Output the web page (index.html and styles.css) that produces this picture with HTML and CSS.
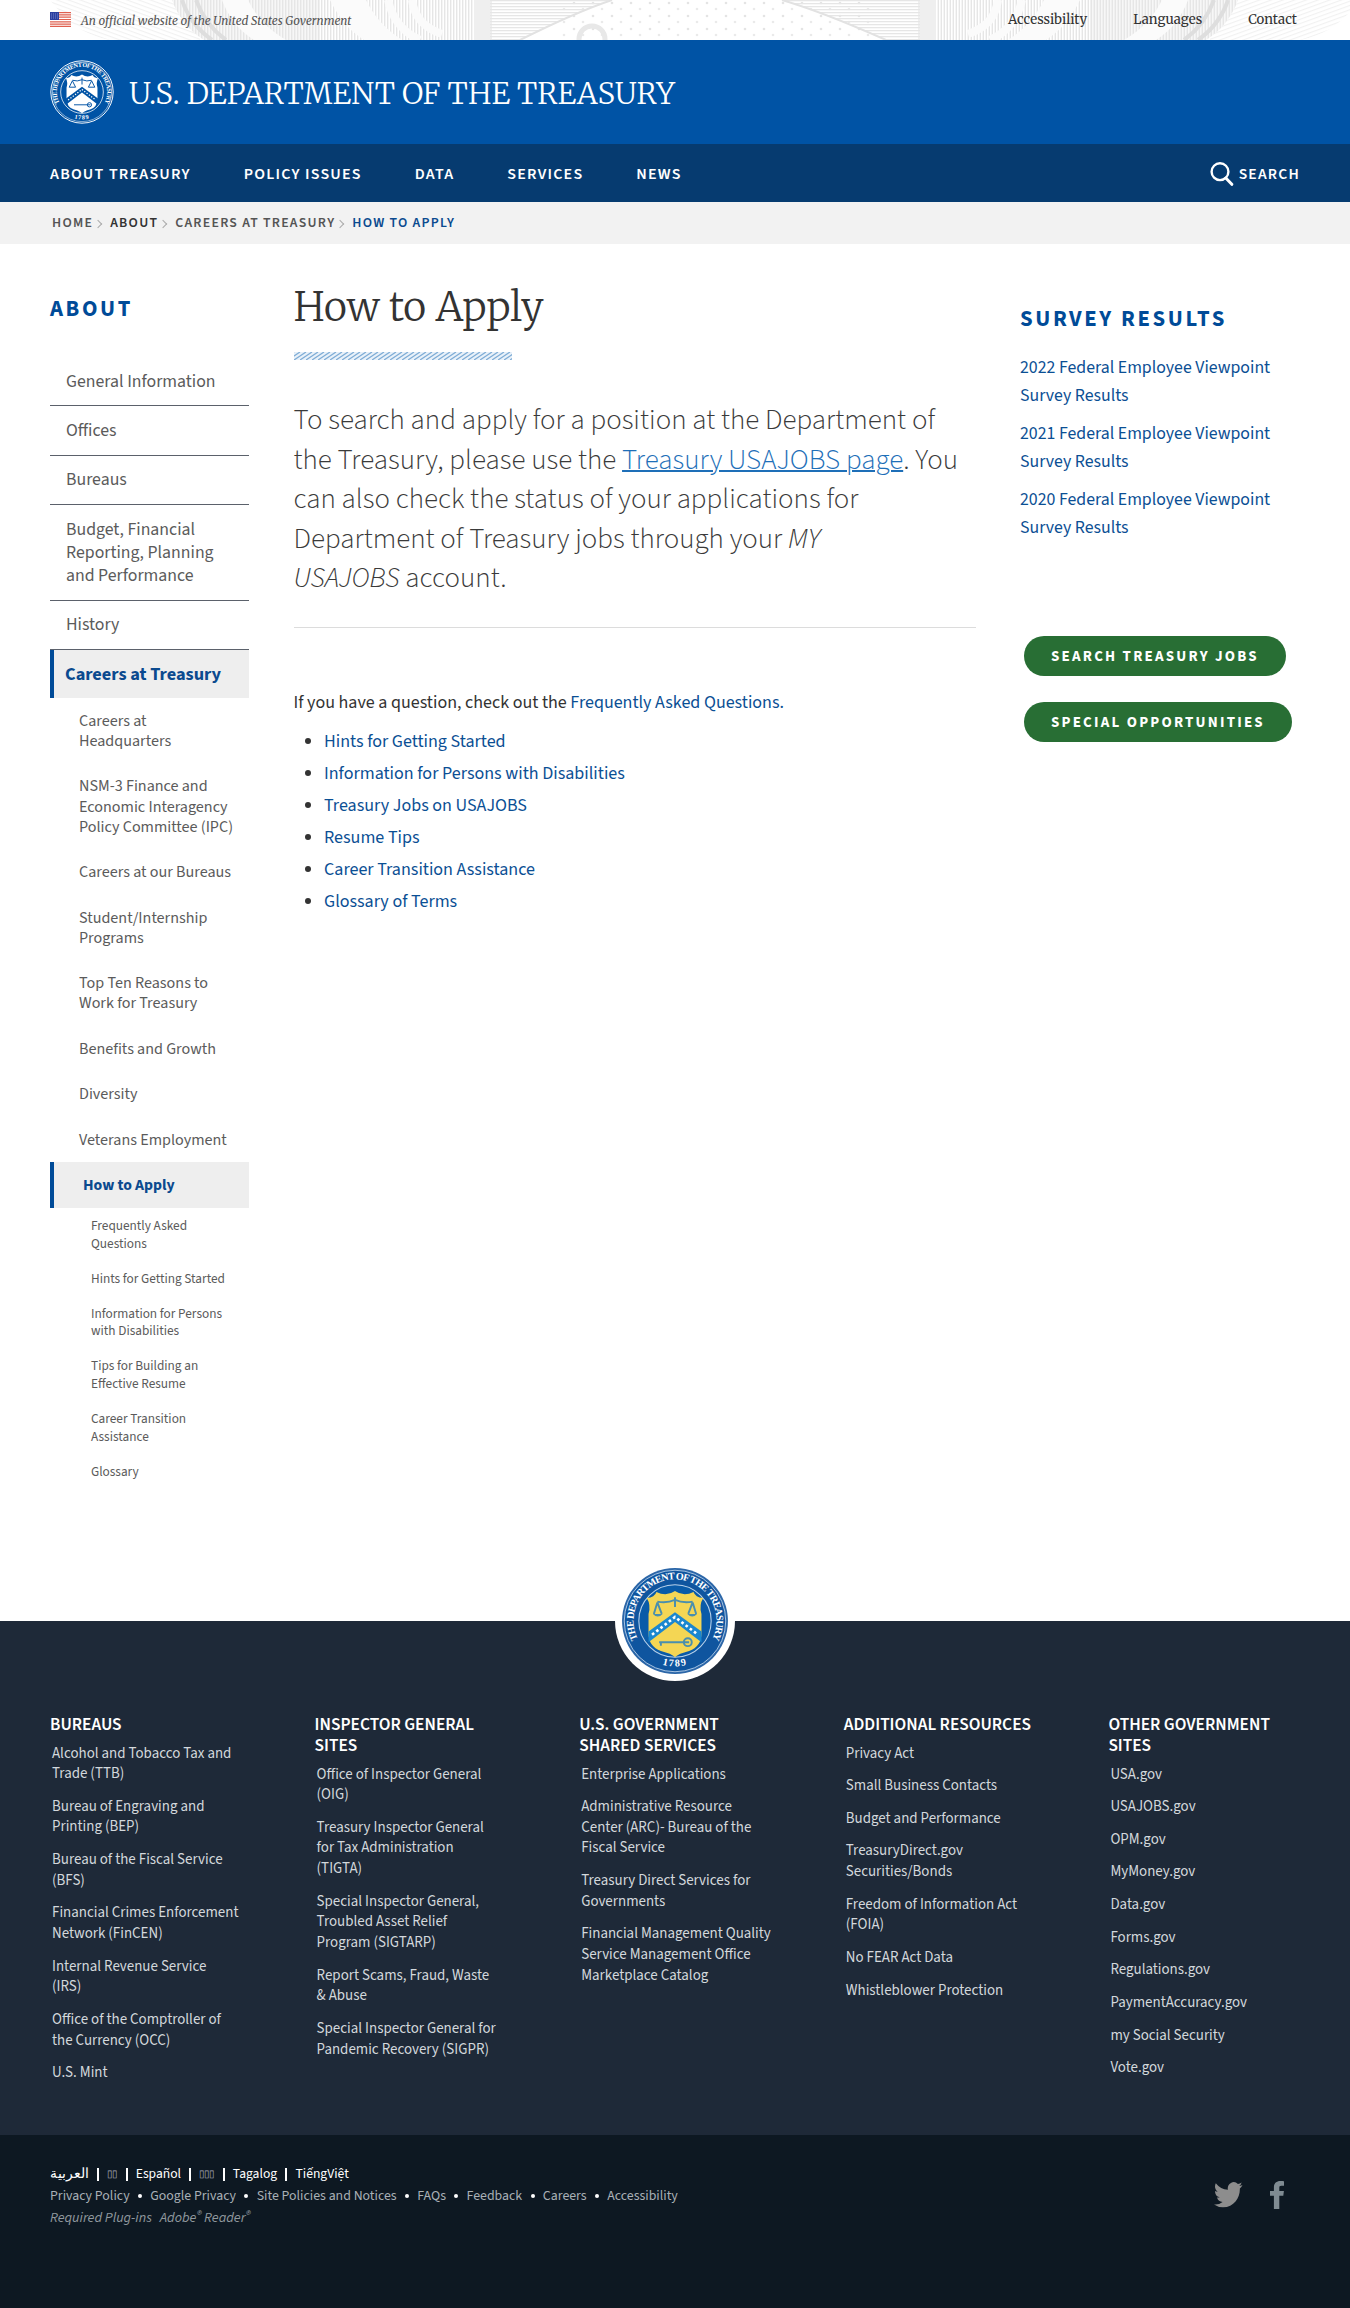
FILE: index.html
```
<!DOCTYPE html>
<html lang="en">
<head>
<meta charset="utf-8">
<title>How to Apply | U.S. Department of the Treasury</title>
<link rel="stylesheet" href="styles.css">
</head>
<body>
<div class="topbar">
  <svg class="engraving" viewBox="0 0 1350 40" width="1350" height="40" aria-hidden="true">
    <defs>
      <pattern id="vl" width="3" height="40" patternUnits="userSpaceOnUse"><rect width="1.4" height="40" fill="#e6e6e6"/></pattern>
      <pattern id="hl" width="40" height="3" patternUnits="userSpaceOnUse"><rect width="40" height="1.3" fill="#e6e6e6"/></pattern>
      <pattern id="dl" width="4" height="4" patternUnits="userSpaceOnUse" patternTransform="rotate(20)"><rect width="4" height="1.2" fill="#f1f1f1"/></pattern>
      <pattern id="dots" width="19" height="13" patternUnits="userSpaceOnUse"><circle cx="4" cy="3" r="1.3" fill="#e4e4e4"/><circle cx="13" cy="9" r="1.3" fill="#eaeaea"/></pattern>
      <g id="scroll">
        <path d="M50 0H200V40H110C80 34 66 20 50 0Z" fill="url(#dl)"/>
        <path d="M172 0H320V40H204C188 30 178 16 172 0Z" fill="#f7f7f7"/>
        <path d="M172 0H488V40H204C188 30 178 16 172 0Z" fill="url(#vl)"/>
        <path d="M182 0C188 18 198 30 212 40M196 0C202 16 212 30 226 40" fill="none" stroke="#dedede" stroke-width="4"/>
        <path d="M222 0H248C256 16 266 28 286 40H254C238 30 228 16 222 0ZM330 0H366C374 16 384 28 402 40H364C348 30 338 16 330 0Z" fill="#fbfbfb"/>
        <path d="M388 0C392 18 402 32 420 40M412 0C414 16 424 28 442 34" fill="none" stroke="#fbfbfb" stroke-width="8"/>
        <path d="M474 0H492V40H474Z" fill="#efefef"/>
      </g>
    </defs>
    <rect x="560" width="310" height="40" fill="url(#dots)"/>
    <use href="#scroll"/>
    <use href="#scroll" transform="translate(1410 0) scale(-1 1)"/>
    <path d="M490 0H610C582 10 550 24 520 40H490Z" fill="url(#hl)"/>
    <path d="M612 0C582 10 552 24 520 40" fill="none" stroke="#e2e2e2" stroke-width="2"/>
    <circle cx="592" cy="39" r="13" fill="none" stroke="#e8e8e8" stroke-width="5"/>
    <path d="M782 0H920V40H886C850 24 816 10 782 0Z" fill="url(#hl)"/>
    <path d="M782 0C816 10 850 24 886 40" fill="none" stroke="#e2e2e2" stroke-width="2"/>
  </svg>
  <div class="topbar-row">
    <div class="official">
      <svg class="flag" viewBox="0 0 21 15" width="21" height="15" aria-hidden="true">
        <rect width="21" height="15" fill="#fff"/>
        <path d="M0 .6H21M0 2.9H21M0 5.2H21M0 7.5H21M0 9.8H21M0 12.1H21M0 14.4H21" stroke="#e0604f" stroke-width="1.2"/>
        <rect width="9" height="8" fill="#2b3fa0"/>
        <path d="M1 2H9M1 4H9M1 6H9" stroke="#8f9ad6" stroke-width=".8" stroke-dasharray="1 1"/>
      </svg>
      <span>An official website of the United States Government</span>
    </div>
    <nav class="utility"><a>Accessibility</a><a>Languages</a><a>Contact</a></nav>
  </div>
</div>

<header class="brand">
  <svg class="brand-seal" viewBox="0 0 120 120" width="64" height="64" aria-hidden="true">
    <defs>
      <path id="arc-top" d="M19.1 83A47 47 0 1 1 100.9 83"/>
      <path id="arc-bottom" d="M30 102A52 52 0 0 0 90 102"/>
    </defs>
    <circle cx="60" cy="60" r="58.5" fill="none" stroke="#fff" stroke-width="1.8"/>
    <circle cx="60" cy="60" r="55.5" fill="none" stroke="#fff" stroke-width="1"/>
    <circle cx="60" cy="60" r="40" fill="none" stroke="#fff" stroke-width="1.4"/>
    <text class="seal-text" fill="#fff"><textPath href="#arc-top" startOffset="50%" text-anchor="middle" textLength="190">THE DEPARTMENT OF THE TREASURY</textPath></text>
    <text class="seal-text seal-year" fill="#fff"><textPath href="#arc-bottom" startOffset="50%" text-anchor="middle">1789</textPath></text>
    <path d="M30 34Q38 33 40 28Q50 34 60 27Q70 34 80 28Q82 33 90 34Q86 42 89 52V72Q89 88 75 93Q64 96 60 100Q56 96 45 93Q31 88 31 72V52Q34 42 30 34Z" fill="#fff"/>
    <path d="M60 50L90 72V84L60 61L30 84V72Z" fill="#0053a5"/>
    <path d="M34 75L60 55.5L86 75" fill="none" stroke="#fff" stroke-width="2.4" stroke-dasharray="2.4 3"/>
    <path d="M42 38Q51 41 60 37Q69 41 78 38M60 33V46M42 39L36 51H48ZM78 39L72 51H84ZM45 84H76M70 84A4 4 0 1 0 78 84A4 4 0 1 0 70 84" fill="none" stroke="#0053a5" stroke-width="1.8"/>
  </svg>
  <span class="brand-name">U.S. DEPARTMENT OF THE TREASURY</span>
</header>

<nav class="mainnav">
  <div class="mainnav-links"><a>ABOUT TREASURY</a><a>POLICY ISSUES</a><a>DATA</a><a>SERVICES</a><a>NEWS</a></div>
  <a class="search">
    <svg viewBox="0 0 24 24" width="24" height="24" aria-hidden="true"><circle cx="10" cy="9.7" r="8.4" fill="none" stroke="#fff" stroke-width="2.4"/><path d="M15.8 16L21.8 22.3" stroke="#fff" stroke-width="3" stroke-linecap="round"/></svg>
    <span>SEARCH</span>
  </a>
</nav>

<nav class="crumbs">
  <a>HOME</a><i class="chev"></i><a class="dark">ABOUT</a><i class="chev"></i><a>CAREERS AT TREASURY</a><i class="chev"></i><a class="here">HOW TO APPLY</a>
</nav>

<div class="page">
  <aside class="side">
    <h2>ABOUT</h2>
    <ul class="side-list">
      <li>General Information</li>
      <li>Offices</li>
      <li>Bureaus</li>
      <li>Budget, Financial<br>Reporting, Planning<br>and Performance</li>
      <li>History</li>
      <li class="active">Careers at Treasury</li>
    </ul>
    <ul class="side-sub">
      <li>Careers at<br>Headquarters</li>
      <li>NSM-3 Finance and<br>Economic Interagency<br>Policy Committee (IPC)</li>
      <li>Careers at our Bureaus</li>
      <li>Student/Internship<br>Programs</li>
      <li>Top Ten Reasons to<br>Work for Treasury</li>
      <li>Benefits and Growth</li>
      <li>Diversity</li>
      <li>Veterans Employment</li>
      <li class="active">How to Apply</li>
    </ul>
    <ul class="side-leaf">
      <li>Frequently Asked<br>Questions</li>
      <li>Hints for Getting Started</li>
      <li>Information for Persons<br>with Disabilities</li>
      <li>Tips for Building an<br>Effective Resume</li>
      <li>Career Transition<br>Assistance</li>
      <li>Glossary</li>
    </ul>
  </aside>

  <main class="main">
    <h1>How to Apply</h1>
    <svg class="rule" width="218" height="8" aria-hidden="true">
      <defs><pattern id="stripe" width="6" height="8" patternUnits="userSpaceOnUse"><path d="M-12 8L0 0M-6 8L6 0M0 8L12 0" stroke="#7fadd6" stroke-width="1.3"/></pattern></defs>
      <rect width="218" height="8" fill="#e9f1f9"/>
      <rect width="218" height="8" fill="url(#stripe)"/>
    </svg>
    <p class="lede">To search and apply for a position at the Department of<br>the Treasury, please use the <a>Treasury USAJOBS page</a>. You<br>can also check the status of your applications for<br>Department of Treasury jobs through your <em>MY<br>USAJOBS</em> account.</p>
    <p class="question">If you have a question, check out the <a>Frequently Asked Questions.</a></p>
    <ul class="links">
      <li><a>Hints for Getting Started</a></li>
      <li><a>Information for Persons with Disabilities</a></li>
      <li><a>Treasury Jobs on USAJOBS</a></li>
      <li><a>Resume Tips</a></li>
      <li><a>Career Transition Assistance</a></li>
      <li><a>Glossary of Terms</a></li>
    </ul>
  </main>

  <aside class="right">
    <h2>SURVEY RESULTS</h2>
    <ul class="survey">
      <li>2022 Federal Employee Viewpoint<br>Survey Results</li>
      <li>2021 Federal Employee Viewpoint<br>Survey Results</li>
      <li>2020 Federal Employee Viewpoint<br>Survey Results</li>
    </ul>
    <div class="buttons"><a>SEARCH TREASURY JOBS</a><a>SPECIAL OPPORTUNITIES</a></div>
  </aside>
</div>

<footer class="footer">
  <svg class="footer-seal" viewBox="-8 -8 136 136" width="120" height="120" aria-hidden="true">
    <circle cx="60" cy="60" r="68" fill="#fff"/>
    <circle cx="60" cy="60" r="60" fill="#2b66a8"/>
    <circle cx="60" cy="60" r="57.5" fill="#0f559f" stroke="#b9d2ea" stroke-width="1"/>
    <circle cx="60" cy="60" r="41" fill="#0a5ba8" stroke="#b9d2ea" stroke-width="1.2"/>
    <text class="seal-text" fill="#fff"><textPath href="#arc-top" startOffset="50%" text-anchor="middle" textLength="190">THE DEPARTMENT OF THE TREASURY</textPath></text>
    <text class="seal-text seal-year" fill="#fff"><textPath href="#arc-bottom" startOffset="50%" text-anchor="middle">1789</textPath></text>
    <path d="M28 34Q37 33 39 27Q50 33 60 26Q70 33 81 27Q83 33 92 34Q87 42 90 52V74Q90 89 76 94Q64 97 60 101Q56 97 44 94Q30 89 30 74V52Q33 42 28 34Z" fill="#f4d654"/>
    <path d="M60 50L90 72V84L60 61L30 84V72Z" fill="#1b87cf"/>
    <path d="M34 75.5L60 55.5L86 75.5" fill="none" stroke="#fff" stroke-width="3" stroke-dasharray="3 3"/>
    <path d="M40 38Q51 40 60 36Q69 40 80 38M60 33V44M40 39L36 52M40 39L45 52M80 39L75 52M80 39L84 52M42 84H76M44 84V88M70 84A4 4 0 1 0 79 84A4 4 0 1 0 70 84" fill="none" stroke="#4a8fae" stroke-width="2.2"/>
    <path d="M35 52H46Q40.5 58 35 52ZM74 52H85Q79.5 58 74 52Z" fill="#4a8fae"/>
  </svg>
  <div class="footer-cols">
    <section><h3>BUREAUS</h3><ul>
      <li>Alcohol and Tobacco Tax and<br>Trade (TTB)</li><li>Bureau of Engraving and<br>Printing (BEP)</li><li>Bureau of the Fiscal Service<br>(BFS)</li><li>Financial Crimes Enforcement<br>Network (FinCEN)</li><li>Internal Revenue Service<br>(IRS)</li><li>Office of the Comptroller of<br>the Currency (OCC)</li><li>U.S. Mint</li></ul></section>
    <section><h3>INSPECTOR GENERAL<br>SITES</h3><ul>
      <li>Office of Inspector General<br>(OIG)</li><li>Treasury Inspector General<br>for Tax Administration<br>(TIGTA)</li><li>Special Inspector General,<br>Troubled Asset Relief<br>Program (SIGTARP)</li><li>Report Scams, Fraud, Waste<br>&amp; Abuse</li><li>Special Inspector General for<br>Pandemic Recovery (SIGPR)</li></ul></section>
    <section><h3>U.S. GOVERNMENT<br>SHARED SERVICES</h3><ul>
      <li>Enterprise Applications</li><li>Administrative Resource<br>Center (ARC)- Bureau of the<br>Fiscal Service</li><li>Treasury Direct Services for<br>Governments</li><li>Financial Management Quality<br>Service Management Office<br>Marketplace Catalog</li></ul></section>
    <section><h3>ADDITIONAL RESOURCES</h3><ul>
      <li>Privacy Act</li><li>Small Business Contacts</li><li>Budget and Performance</li><li>TreasuryDirect.gov<br>Securities/Bonds</li><li>Freedom of Information Act<br>(FOIA)</li><li>No FEAR Act Data</li><li>Whistleblower Protection</li></ul></section>
    <section><h3>OTHER GOVERNMENT<br>SITES</h3><ul>
      <li>USA.gov</li><li>USAJOBS.gov</li><li>OPM.gov</li><li>MyMoney.gov</li><li>Data.gov</li><li>Forms.gov</li><li>Regulations.gov</li><li>PaymentAccuracy.gov</li><li>my Social Security</li><li>Vote.gov</li></ul></section>
  </div>
</footer>

<div class="legal">
  <div class="legal-lines">
    <div class="langs"><a>العربية</a><b></b><a class="boxes">▯▯</a><b></b><a>Español</a><b></b><a class="boxes">▯▯▯</a><b></b><a>Tagalog</a><b></b><a>TiếngViệt</a></div>
    <div class="policies"><a>Privacy Policy</a><b></b><a>Google Privacy</a><b></b><a>Site Policies and Notices</a><b></b><a>FAQs</a><b></b><a>Feedback</a><b></b><a>Careers</a><b></b><a>Accessibility</a></div>
    <div class="plugins"><span>Required Plug-ins</span><span>Adobe<sup>®</sup> Reader<sup>®</sup></span></div>
  </div>
  <div class="social">
    <svg viewBox="0 0 24 20" width="29" height="26" preserveAspectRatio="none" aria-hidden="true"><path fill="#8d8d8d" d="M23.600 2.300a9.600 9.600 0 0 1-2.800.8A4.900 4.900 0 0 0 22.900.4a9.800 9.800 0 0 1-3.100 1.200 4.900 4.900 0 0 0-8.300 4.400A13.800 13.800 0 0 1 1.500 1a4.900 4.900 0 0 0 1.500 6.500 4.800 4.800 0 0 1-2.200-.6v.1a4.900 4.900 0 0 0 3.900 4.800 4.900 4.900 0 0 1-2.200.1 4.900 4.900 0 0 0 4.600 3.400A9.800 9.800 0 0 1 0 17.300a13.800 13.800 0 0 0 7.500 2.200c9 0 13.900-7.400 13.900-13.900v-.6a9.900 9.900 0 0 0 2.200-2.700z"/></svg>
    <svg viewBox="0 0 14 28" width="14" height="28" aria-hidden="true"><path fill="#7f8b92" d="M14 .2V4.700H11.400C9.500 4.700 9.300 5.600 9.300 7V9.900H13.900L13.300 14.700H9.300V28H3.900V14.700H0V9.900H3.900V6.300C3.900 2.200 6.600 0 10.300 0C12.100 0 13.600.1 14 .2Z"/></svg>
  </div>
</div>
</body>
</html>
```
FILE: styles.css
```
* { box-sizing: border-box; }
body, h1, h2, h3, p, ul { margin: 0; padding: 0; }
ul { list-style: none; }
body {
  font-family: "Source Sans 3", "Source Sans Pro", "Noto Sans CJK SC", sans-serif;
  font-size: 17.8px;
  color: #323a45;
  background: #fff;
}

.topbar { position: relative; height: 40px; overflow: hidden; }
.engraving { position: absolute; left: 0; top: 0; }
.topbar-row {
  position: relative;
  display: flex;
  justify-content: space-between;
  align-items: center;
  height: 40px;
  padding: 0 53px 2px 50px;
  font-family: Merriweather, "DejaVu Serif Condensed", "DejaVu Serif", serif;
  font-size: 13.2px;
  color: #333;
}
.official { display: flex; align-items: center; gap: 10px; font-size: 11.75px; font-style: italic; color: #555; }
.official span { padding-top: 2px; }
.utility { display: flex; gap: 46px; }

.brand { display: flex; align-items: center; gap: 15px; height: 104px; padding: 0 50px; background: #0053a5; }
.seal-text { font: bold 11.5px "Liberation Serif", serif; }
.seal-year { letter-spacing: 1.5px; }
.brand-name {
  padding-top: 4px;
  font-family: Merriweather, "DejaVu Serif Condensed", serif;
  font-weight: 300;
  font-size: 29.7px;
  line-height: 40px;
  color: #fff;
}

.mainnav {
  display: flex;
  justify-content: space-between;
  align-items: center;
  height: 58px;
  padding: 1px 50px 0;
  background: #063b70;
  color: #fff;
  font-weight: 600;
  font-size: 16px;
  letter-spacing: 1.2px;
}
.mainnav-links { display: flex; gap: 53px; }
.search { display: flex; align-items: center; gap: 5px; }
.search span { font-size: 15.6px; }

.crumbs {
  display: flex;
  align-items: center;
  height: 42px;
  padding: 0 52px;
  background: #f2f2f2;
  font-weight: 600;
  font-size: 13.8px;
  letter-spacing: 1.25px;
  color: #555;
}
.chev {
  width: 6px;
  height: 6px;
  margin: 1px 9px 0 2px;
  border-top: 1px solid #aaa;
  border-right: 1px solid #aaa;
  transform: rotate(45deg);
}
.dark { color: #333; }
.here { color: #0b4a8f; }

.page {
  display: grid;
  grid-template-columns: 199px 682px 1fr;
  column-gap: 44.5px;
  height: 1377px;
  padding: 2px 0 0 50px;
}
h2 { font-weight: 700; font-size: 22.7px; line-height: 30px; letter-spacing: 2.6px; color: #004b98; }

.side { padding-top: 48px; color: #5b5b5b; }
.side-list { margin-top: 33px; line-height: 23px; }
.side-list li { padding: 12.7px 0 12.7px 16px; border-bottom: 1px solid #5b616b; }
.side-list .active {
  padding-left: 11px;
  border-bottom: 0;
  border-left: 4px solid #004b98;
  background: #eee;
  color: #0b4a8f;
  font-weight: 700;
  font-size: 18.3px;
}
.side-sub { font-size: 16.1px; line-height: 20.2px; }
.side-sub li { padding: 12.6px 0 12.6px 29px; }
.side-sub .active {
  padding: 12.9px 0 12.9px 29px;
  border-left: 4px solid #004b98;
  background: #eee;
  color: #0b4a8f;
  font-weight: 700;
  font-size: 15.7px;
}
.side-leaf { font-size: 13.3px; line-height: 17.5px; }
.side-leaf li { padding: 8.8px 0 8.8px 41px; }

.main { padding-top: 36px; }
h1 {
  font-family: Merriweather, "DejaVu Serif Condensed", serif;
  font-weight: 300;
  font-size: 39.5px;
  line-height: 50px;
  color: #333;
}
.rule { display: block; margin-top: 20px; }
.lede {
  margin-top: 41px;
  padding-bottom: 28px;
  border-bottom: 1px solid #dcdcdc;
  font-weight: 300;
  font-size: 28.95px;
  line-height: 39.5px;
  color: #3a3a3a;
}
.lede a { color: #1e6fb8; text-decoration: underline; text-decoration-thickness: 1.5px; }
.question { margin-top: 61px; font-size: 18px; line-height: 28px; color: #333; }
.question a, .links a { color: #0b4f94; }
.links { margin-top: 9px; padding-left: 30.5px; list-style: disc; font-size: 18.05px; line-height: 32px; color: #333; }

.right { padding-top: 58px; }
.survey { display: flex; flex-direction: column; gap: 10px; margin-top: 20px; line-height: 28px; color: #0b4f94; }
.buttons { display: flex; flex-direction: column; align-items: flex-start; gap: 26px; margin: 94px 0 0 4px; }
.buttons a {
  height: 40px;
  padding: 0 27px;
  border-radius: 20px;
  background: #286e34;
  color: #fff;
  font-weight: 700;
  font-size: 15px;
  line-height: 42px;
  letter-spacing: 2.2px;
}

.footer { position: relative; height: 514px; padding: 93px 0 0 50px; background: #1e2938; }
.footer-seal { position: absolute; left: 615px; top: -60px; }
.footer-cols { display: grid; grid-template-columns: repeat(5, 264.6px); }
h3 { font-weight: 600; font-size: 17.4px; line-height: 21px; color: #fff; }
.footer ul {
  display: flex;
  flex-direction: column;
  gap: 12px;
  margin-top: 8.5px;
  padding-left: 2px;
  font-size: 14.95px;
  line-height: 20.65px;
  color: #d3d8dc;
}

.legal {
  display: flex;
  justify-content: space-between;
  height: 173px;
  padding: 28px 66px 0 50px;
  background: #0d1822;
  color: #fff;
  font-size: 13.85px;
  line-height: 22px;
}
.langs, .policies { display: flex; align-items: center; }
.langs { font-size: 13.6px; }
.langs b { width: 2px; height: 13px; margin: 0 8.2px; background: #fff; }
.boxes { font-size: 10px; letter-spacing: -1px; color: #aab; }
.policies { color: #a9b0b6; }
.policies b { width: 4px; height: 4px; margin: 0 8.3px; border-radius: 2px; background: #fff; }
.plugins { display: flex; gap: 8px; font-size: 14.2px; font-style: italic; color: #8f979d; }
sup { font-size: 12px; line-height: 0; vertical-align: 3px; }
.social { display: flex; gap: 27px; align-items: center; height: 64px; }
```
